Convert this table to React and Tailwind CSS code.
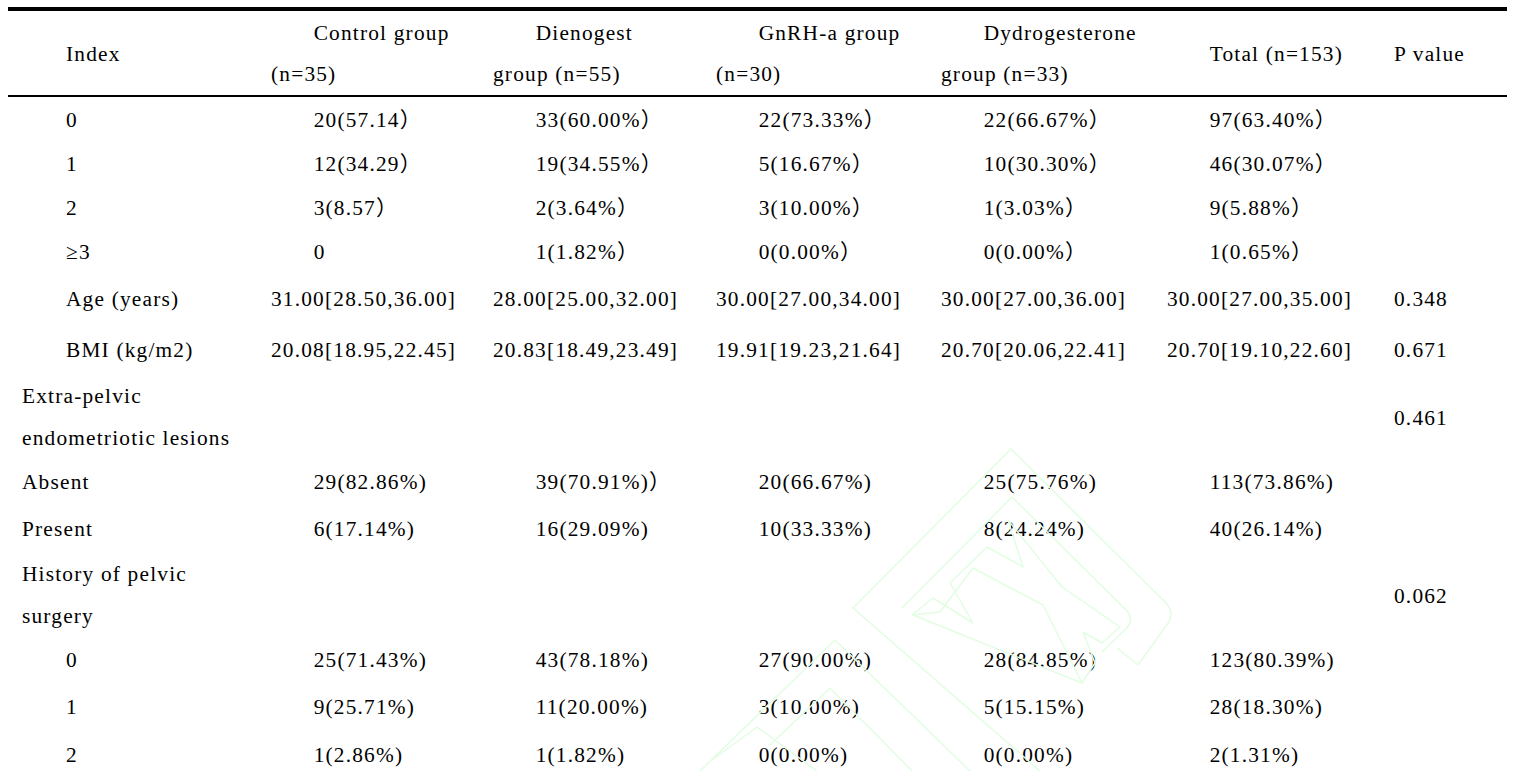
const cols = "grid grid-cols-[249px_222px_223px_225px_226px_227px_127px]";

const rows = [
  { h: "h-[44px]", label: "0", indent: true, vals: ["20(57.14）", "33(60.00%）", "22(73.33%）", "22(66.67%）", "97(63.40%）"] },
  { h: "h-[44px]", label: "1", indent: true, vals: ["12(34.29）", "19(34.55%）", "5(16.67%）", "10(30.30%）", "46(30.07%）"] },
  { h: "h-[44px]", label: "2", indent: true, vals: ["3(8.57）", "2(3.64%）", "3(10.00%）", "1(3.03%）", "9(5.88%）"] },
  { h: "h-[44px]", label: "≥3", indent: true, vals: ["0", "1(1.82%）", "0(0.00%）", "0(0.00%）", "1(0.65%）"] },
  {
    h: "h-[50px]",
    label: "Age (years)",
    indent: true,
    flat: true,
    vals: ["31.00[28.50,36.00]", "28.00[25.00,32.00]", "30.00[27.00,34.00]", "30.00[27.00,36.00]", "30.00[27.00,35.00]"],
    p: "0.348",
  },
  {
    h: "h-[52px]",
    label: "BMI (kg/m2)",
    indent: true,
    flat: true,
    vals: ["20.08[18.95,22.45]", "20.83[18.49,23.49]", "19.91[19.23,21.64]", "20.70[20.06,22.41]", "20.70[19.10,22.60]"],
    p: "0.671",
  },
  { h: "h-[84px]", label: ["Extra-pelvic", "endometriotic lesions"], vals: ["", "", "", "", ""], p: "0.461" },
  { h: "h-[44px]", label: "Absent", vals: ["29(82.86%)", "39(70.91%)）", "20(66.67%)", "25(75.76%)", "113(73.86%)"] },
  { h: "h-[50px]", label: "Present", vals: ["6(17.14%)", "16(29.09%)", "10(33.33%)", "8(24.24%)", "40(26.14%)"] },
  { h: "h-[84px]", label: ["History of pelvic", "surgery"], vals: ["", "", "", "", ""], p: "0.062" },
  { h: "h-[44px]", label: "0", indent: true, vals: ["25(71.43%)", "43(78.18%)", "27(90.00%)", "28(84.85%)", "123(80.39%)"] },
  { h: "h-[50px]", label: "1", indent: true, vals: ["9(25.71%)", "11(20.00%)", "3(10.00%)", "5(15.15%)", "28(18.30%)"] },
  { h: "h-[46px]", label: "2", indent: true, vals: ["1(2.86%)", "1(1.82%)", "0(0.00%)", "0(0.00%)", "2(1.31%)"] },
];

function Watermark() {
  return (
    <svg
      className="pointer-events-none absolute left-0 top-0"
      width="1517"
      height="771"
      viewBox="0 0 1517 771"
      fill="none"
      stroke="#e2fde2"
      strokeWidth="1.5"
      strokeLinejoin="round"
    >
      {/* outer frame */}
      <path d="M1040 771 L853 608 L1011 449 L1166 603 Q1176 614 1166 626 L1138 665 L1117 648" />
      {/* inner frame */}
      <path d="M902 608 L1012 497 L1127 611 Q1134 619 1127 628 L1102 652" />
      {/* letters */}
      <path d="M912 615 L933 598 L973 623 L950 583 L987 547 L1023 567 L1008 520 L1062 587 L1120 627 L1102 643 L1083 632 L1095 663 L1082 683 L1043 605 L973 568 L940 612 L912 615 Z" />
      <path d="M913 615 L1082 683" />
      {/* neighbouring tile */}
      <path d="M700 771 L835 640 L970 771" />
      <path d="M770 745 L830 688 L912 771" />
      <path d="M712 760 L757 727 L817 771" />
    </svg>
  );
}

function Cell({ children, indent, tall }) {
  return (
    <div className={`flex items-center pl-[14px] ${tall ? "" : "pt-[3px]"}`}>
      <div className={indent ? "ml-[42.67px]" : ""}>{children}</div>
    </div>
  );
}

export default function App() {
  return (
    <div className="relative h-[771px] w-[1517px] overflow-hidden bg-white text-black">
      <div className="pl-[8px] pt-[7px] font-['Liberation_Serif','Noto_Sans_CJK_SC',serif] text-[21.33px] tracking-[1.2px]">
        <div className="w-[1499px]">
          {/* header */}
          <div className={`${cols} h-[90px] border-t-[4px] border-b-[2px] border-black pt-[2px] leading-[41px]`}>
            <div className="flex items-center pl-[58px]">Index</div>
            <div className="flex flex-col justify-center pl-[14px]">
              <div className="pl-[42.67px]">Control group</div>
              <div>(n=35)</div>
            </div>
            <div className="flex flex-col justify-center pl-[14px]">
              <div className="pl-[42.67px]">Dienogest</div>
              <div>group (n=55)</div>
            </div>
            <div className="flex flex-col justify-center pl-[14px]">
              <div className="pl-[42.67px]">GnRH-a group</div>
              <div>(n=30)</div>
            </div>
            <div className="flex flex-col justify-center pl-[14px]">
              <div className="pl-[42.67px]">Dydrogesterone</div>
              <div>group (n=33)</div>
            </div>
            <div className="flex items-center pl-[56.67px]">Total (n=153)</div>
            <div className="flex items-center pl-[14px]">P value</div>
          </div>

          {/* body */}
          {rows.map((r, i) => {
            const tall = Array.isArray(r.label);
            return (
              <div key={i} className={`${cols} ${r.h}`}>
                {tall ? (
                  <div className="flex flex-col justify-center pb-[3px] pl-[14px] leading-[42px]">
                    <div>{r.label[0]}</div>
                    <div>{r.label[1]}</div>
                  </div>
                ) : (
                  <div className={`flex items-center pt-[3px] ${r.indent ? "pl-[58px]" : "pl-[14px]"}`}>{r.label}</div>
                )}
                {r.vals.map((v, j) => (
                  <Cell key={j} indent={!r.flat} tall={tall}>
                    {v}
                  </Cell>
                ))}
                <Cell tall={tall}>{r.p || ""}</Cell>
              </div>
            );
          })}
        </div>
      </div>
      <Watermark />
    </div>
  );
}
